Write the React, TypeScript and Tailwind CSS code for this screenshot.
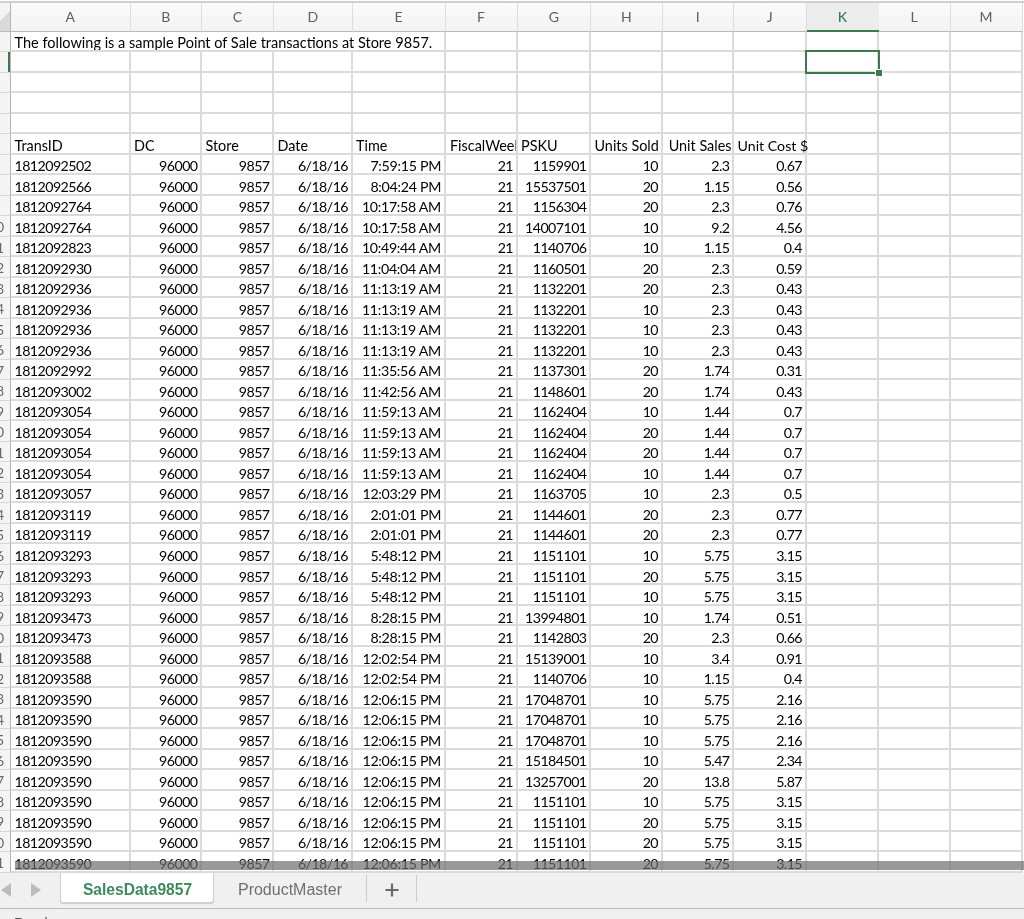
const COLS = ["A", "B", "C", "D", "E", "F", "G", "H", "I", "J", "K", "L", "M"];
const GRID = "grid grid-cols-[11px_119.5px_71.5px_72px_78.5px_93px_72px_73.5px_71.5px_71.5px_72.5px_72px_72px_72px]";
const ROW_H = "h-[20.53px]";
const CELL = "border-r-2 border-b-2 border-[#dbdbdb] flex items-center overflow-hidden whitespace-nowrap pt-[4px]";
const TEXT = `${CELL} text-[14.4px] pl-[3.5px]`;
const NUM = `${CELL} justify-end pr-[2.5px] text-[14.2px] tracking-[-0.55px]`;
const TIME = `${CELL} justify-end pr-[2.5px] text-[14.2px] tracking-[-0.3px]`;

const times: [string, number][] = [
  ["7:59:15 PM", 1], ["8:04:24 PM", 1], ["10:17:58 AM", 2], ["10:49:44 AM", 1], ["11:04:04 AM", 1],
  ["11:13:19 AM", 4], ["11:35:56 AM", 1], ["11:42:56 AM", 1], ["11:59:13 AM", 4], ["12:03:29 PM", 1],
  ["2:01:01 PM", 2], ["5:48:12 PM", 3], ["8:28:15 PM", 2], ["12:02:54 PM", 2], ["12:06:15 PM", 9],
];
const TIMES = times.flatMap(([t, n]) => Array.from({ length: n }, () => t));

const IDS = [
  "1812092502", "1812092566", "1812092764", "1812092764", "1812092823", "1812092930", "1812092936",
  "1812092936", "1812092936", "1812092936", "1812092992", "1812093002", "1812093054", "1812093054",
  "1812093054", "1812093054", "1812093057", "1812093119", "1812093119", "1812093293", "1812093293",
  "1812093293", "1812093473", "1812093473", "1812093588", "1812093588", "1812093590", "1812093590",
  "1812093590", "1812093590", "1812093590", "1812093590", "1812093590", "1812093590", "1812093590",
];

const REST: [string, string, string, string][] = [
  ["1159901", "10", "2.3", "0.67"],
  ["15537501", "20", "1.15", "0.56"],
  ["1156304", "20", "2.3", "0.76"],
  ["14007101", "10", "9.2", "4.56"],
  ["1140706", "10", "1.15", "0.4"],
  ["1160501", "20", "2.3", "0.59"],
  ["1132201", "20", "2.3", "0.43"],
  ["1132201", "10", "2.3", "0.43"],
  ["1132201", "10", "2.3", "0.43"],
  ["1132201", "10", "2.3", "0.43"],
  ["1137301", "20", "1.74", "0.31"],
  ["1148601", "20", "1.74", "0.43"],
  ["1162404", "10", "1.44", "0.7"],
  ["1162404", "20", "1.44", "0.7"],
  ["1162404", "20", "1.44", "0.7"],
  ["1162404", "10", "1.44", "0.7"],
  ["1163705", "10", "2.3", "0.5"],
  ["1144601", "20", "2.3", "0.77"],
  ["1144601", "20", "2.3", "0.77"],
  ["1151101", "10", "5.75", "3.15"],
  ["1151101", "20", "5.75", "3.15"],
  ["1151101", "10", "5.75", "3.15"],
  ["13994801", "10", "1.74", "0.51"],
  ["1142803", "20", "2.3", "0.66"],
  ["15139001", "10", "3.4", "0.91"],
  ["1140706", "10", "1.15", "0.4"],
  ["17048701", "10", "5.75", "2.16"],
  ["17048701", "10", "5.75", "2.16"],
  ["17048701", "10", "5.75", "2.16"],
  ["15184501", "10", "5.47", "2.34"],
  ["13257001", "20", "13.8", "5.87"],
  ["1151101", "10", "5.75", "3.15"],
  ["1151101", "20", "5.75", "3.15"],
  ["1151101", "20", "5.75", "3.15"],
  ["1151101", "20", "5.75", "3.15"],
];

function RowHead({ n, active }: { n: number; active?: boolean }) {
  return (
    <div className="relative bg-[#f4f4f4] border-r border-b border-r-[#b5b5b5] border-b-[#d6d6d6] flex items-center justify-end pr-[6px] pt-[3px] overflow-hidden text-[13.5px] text-[#666666]">
      {n >= 10 ? n : ""}
      {active && <div className="absolute right-0 top-0 bottom-0 w-[2px] bg-[#3c7a4e]" />}
    </div>
  );
}

function EmptyCells({ from }: { from: number }) {
  return (
    <>
      {COLS.slice(from).map((c) => (
        <div key={c} className={CELL} />
      ))}
    </>
  );
}

export default function App() {
  return (
    <div className="w-[1024px] h-[919px] overflow-hidden bg-white relative flex flex-col font-['Lato',sans-serif] text-[#000000] blur-[0.3px]">
      <div className="h-[1px] shrink-0 bg-white" />
      <div className="h-[2px] shrink-0 bg-[#cfcfcf]" />

      {/* column headers */}
      <div className={`${GRID} h-[28.5px] shrink-0`}>
        <div className="bg-[#f4f4f4] border-r border-b border-r-[#b5b5b5] border-b-[#bdbdbd] flex items-end justify-end overflow-hidden">
          <svg width="10" height="20" viewBox="0 0 10 20" className="block">
            <polygon points="10,0 10,20 0,20 0,10" fill="#d9d9d9" />
          </svg>
        </div>
        {COLS.map((c) =>
          c === "K" ? (
            <div key={c} className="bg-[#ececec] border-b-2 border-[#3c7a4e] flex items-center justify-center text-[14px] text-[#3c7a4e] font-medium">
              {c}
            </div>
          ) : (
            <div key={c} className="bg-gradient-to-b from-[#fafafa] to-[#f3f3f3] border-r border-b border-r-[#dddddd] border-b-[#b8b8b8] flex items-center justify-center text-[14px] text-[#5f5f5f]">
              {c}
            </div>
          )
        )}
      </div>

      {/* row 1 */}
      <div className={`${GRID} ${ROW_H} shrink-0`}>
        <RowHead n={1} />
        <div className={`${TEXT} col-span-5 text-[14.5px]`}>The following is a sample Point of Sale transactions at Store 9857.</div>
        <EmptyCells from={5} />
      </div>

      {/* row 2, with selected K2 */}
      <div className={`${GRID} ${ROW_H} shrink-0`}>
        <RowHead n={2} active />
        {COLS.map((c) =>
          c === "K" ? (
            <div key={c} className={`${CELL} relative overflow-visible`}>
              <div className="absolute -left-[2px] -top-[2px] w-[75px] h-[24px] border-2 border-[#3c7a4e] z-10" />
              <div className="absolute left-[68px] top-[17px] w-[8px] h-[8px] bg-[#3c7a4e] border border-white z-10" />
            </div>
          ) : (
            <div key={c} className={CELL} />
          )
        )}
      </div>

      {[3, 4, 5].map((n) => (
        <div key={n} className={`${GRID} ${ROW_H} shrink-0`}>
          <RowHead n={n} />
          <EmptyCells from={0} />
        </div>
      ))}

      {/* row 6: table header */}
      <div className={`${GRID} ${ROW_H} shrink-0`}>
        <RowHead n={6} />
        <div className={TEXT}>TransID</div>
        <div className={TEXT}>DC</div>
        <div className={TEXT}>Store</div>
        <div className={TEXT}>Date</div>
        <div className={TEXT}>Time</div>
        <div className={`${TEXT} pl-[4.5px]`}>FiscalWeek</div>
        <div className={TEXT}>PSKU</div>
        <div className={TEXT}>Units Sold</div>
        <div className={`${CELL} text-[14.4px] justify-end pr-[0.5px]`}>Unit Sales</div>
        <div className={`${CELL} h-[20.53px] text-[14.2px] pl-[3.5px] overflow-visible`}>Unit Cost $</div>
        <EmptyCells from={10} />
      </div>

      {/* data rows */}
      {IDS.map((id, i) => (
        <div key={i} className={`${GRID} ${ROW_H} shrink-0`}>
          <RowHead n={i + 7} />
          <div className={`${CELL} pl-[3.5px] text-[14.2px] tracking-[-0.55px]`}>{id}</div>
          <div className={NUM}>96000</div>
          <div className={NUM}>9857</div>
          <div className={NUM}>6/18/16</div>
          <div className={TIME}>{TIMES[i]}</div>
          <div className={NUM}>21</div>
          <div className={NUM}>{REST[i][0]}</div>
          <div className={NUM}>{REST[i][1]}</div>
          <div className={NUM}>{REST[i][2]}</div>
          <div className={NUM}>{REST[i][3]}</div>
          <EmptyCells from={10} />
        </div>
      ))}

      {/* horizontal scrollbar thumb lying over the last row */}
      <div className="absolute left-[15px] right-0 top-[861px] h-[9px] bg-[#6e6e6e]/70 z-20" />

      {/* sheet tabs */}
      <div className="h-[35px] shrink-0 bg-[#f0f0f0] flex items-start font-['Liberation_Sans',sans-serif] text-[16px]">
        <div className="w-[60px] h-full flex items-center pl-[1px] gap-[20px]">
          <svg width="10" height="14" viewBox="0 0 10 14"><polygon points="10,0 10,14 0,7" fill="#bcbcbc" /></svg>
          <svg width="10" height="14" viewBox="0 0 10 14"><polygon points="0,0 0,14 10,7" fill="#bcbcbc" /></svg>
        </div>
        <div className="w-[154px] h-[30px] pt-[5px] pl-[1px] bg-white rounded-b-[3px] border border-t-0 border-[#cfcfcf] shadow-[0_1px_1px_rgba(0,0,0,0.15)] flex items-center justify-center font-bold text-[15.6px] text-[#3f8a5c]">
          SalesData9857
        </div>
        <div className="w-[153px] h-[27px] mt-[2px] pt-[4px] border-r border-[#cccccc] flex items-center justify-center text-[#6f6f6f]">
          ProductMaster
        </div>
        <div className="w-[50px] h-[27px] mt-[2px] pt-[3px] border-r border-[#cccccc] flex items-center justify-center">
          <svg width="14" height="14" viewBox="0 0 14 14">
            <path d="M7 0.5V13.5M0.5 7H13.5" stroke="#6a6a6a" strokeWidth="2.2" />
          </svg>
        </div>
      </div>

      {/* status bar */}
      <div className="flex-1 bg-[#f0f0f0] border-t border-[#bcbcbc] pl-[14px] pt-[6px] overflow-hidden font-['Liberation_Sans',sans-serif] text-[14px] leading-[16px] text-[#555555]">
        Ready
      </div>
    </div>
  );
}
